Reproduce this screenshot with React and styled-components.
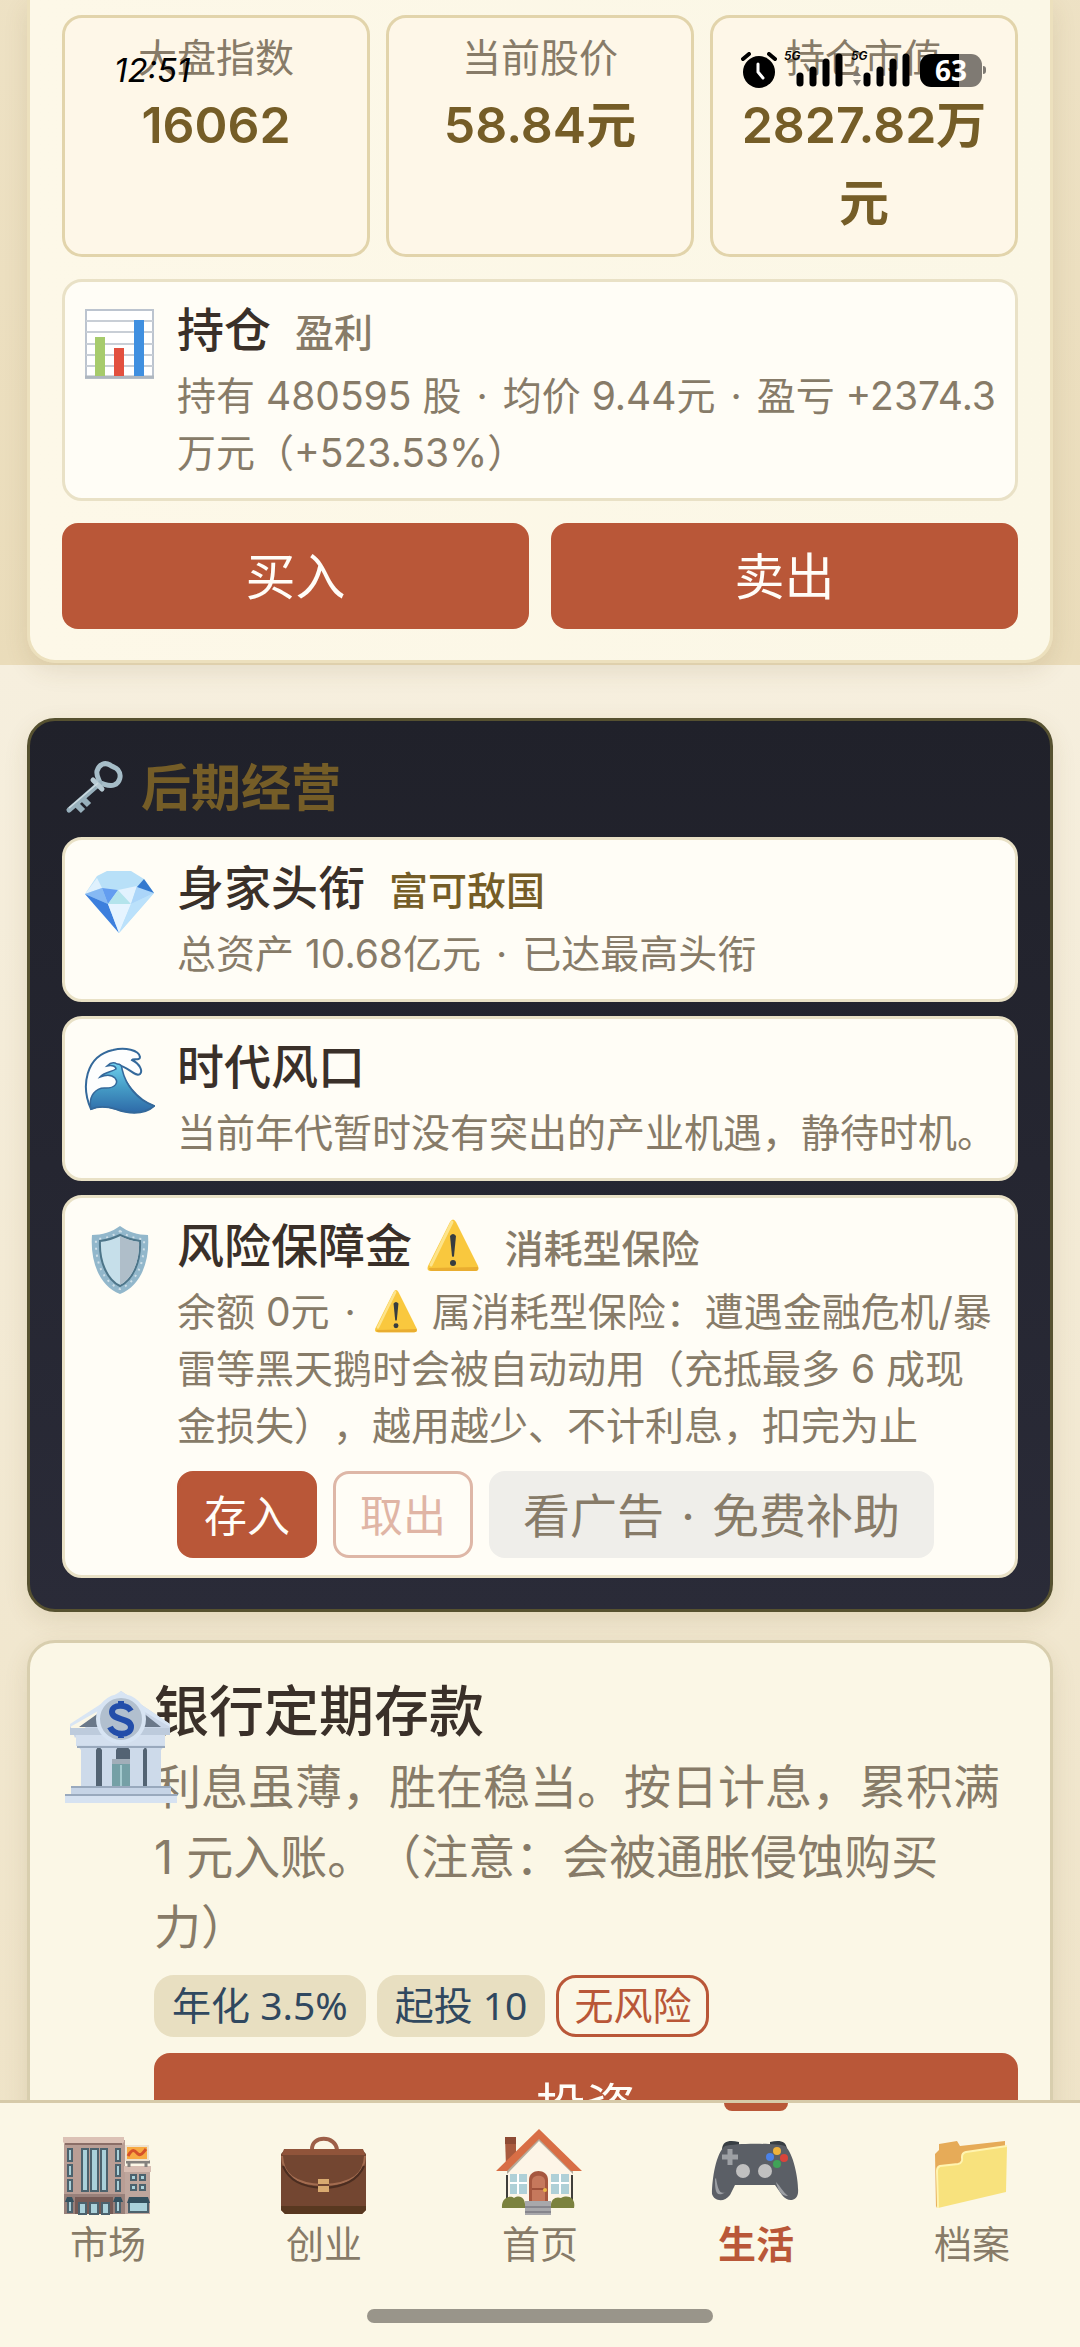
import React from "react";
import styled, { createGlobalStyle } from "styled-components";

const color = {
  ink: "#3a3029",
  muted: "#877b68",
  gold: "#755d27",
  brick: "#b95738",
  cream: "#fbf7e6",
  paper: "#fffdf6",
  line: "#e9e1c6",
};

const GlobalStyle = createGlobalStyle`
  * { box-sizing: border-box; }
  body {
    margin: 0;
    color: ${color.ink};
    font-family: Inter, "Noto Sans CJK SC", sans-serif;
    text-spacing-trim: space-all;
  }
  h2, h3, p { margin: 0; }
  button { font-family: inherit; margin: 0; cursor: pointer; }
`;

const Shell = styled.div`
  position: relative;
  display: flex;
  flex-direction: column;
  height: 100vh;
  overflow: hidden;
`;

const Scroll = styled.main`
  flex: 1;
  min-height: 0;
  overflow-y: auto;
  scrollbar-width: none;
  padding: 0 27px 28px;
  background: linear-gradient(#f6efde, #eadcba) 0 665px / 100% 2347px repeat-y;
`;

const Card = styled.section`
  padding: 31px 32px;
  margin-bottom: 28px;
  border: 3px solid #d8ceae;
  border-radius: 28px;
  background: ${color.cream};
  box-shadow: 0 8px 24px rgba(110, 85, 30, 0.12);
`;

const StockCard = styled(Card)`
  display: grid;
  gap: 22px;
  padding-top: 15px;
  margin-bottom: 55px;
  border-top: 0;
  border-color: #ece0bd;
  border-radius: 0 0 28px 28px;
  background: linear-gradient(90deg, #fdf8e8, #fbf7e6);
`;

const DarkCard = styled(Card)`
  display: grid;
  gap: 14px;
  border-color: #565130;
  background: linear-gradient(#20212a, #2a2b38);
`;

const Stats = styled.div`
  display: grid;
  grid-template-columns: repeat(3, minmax(0, 1fr));
  gap: 16px;
`;

const Stat = styled.div`
  padding: 12px;
  border: 3px solid #e2d4ab;
  border-radius: 20px;
  background: #fef7e8;
  text-align: center;
`;

const StatLabel = styled.div`
  color: ${color.muted};
  font-size: 39px;
  line-height: 56px;
`;

const StatValue = styled.div`
  color: ${color.gold};
  font-size: 50px;
  font-weight: 600;
  line-height: 78px;
`;

const Item = styled.article`
  display: flex;
  align-items: flex-start;
  gap: 22px;
  padding: 17px 15px 17px 18px;
  border: 3px solid ${color.line};
  border-radius: 20px;
  background: ${color.paper};
`;

const ItemIcon = styled.div`
  flex: none;
  display: flex;
  width: 72px;
  padding-top: 9px;
`;

const ItemBody = styled.div`
  flex: 1;
  min-width: 0;
`;

const ItemHead = styled.div`
  display: flex;
  align-items: baseline;
  gap: 24px;
  height: 62px;
  margin-bottom: 6px;
  line-height: 62px;
`;

const ItemTitle = styled.h3`
  font-size: 47px;
  font-weight: 500;
  line-height: 62px;
`;

const Tag = styled.span`
  color: ${(p) => (p.$gold ? color.gold : color.muted)};
  font-size: 39px;
  font-weight: 500;
`;

const Note = styled.p`
  color: ${color.muted};
  font-size: 39px;
  line-height: 57px;
`;

const Separator = styled.span`
  padding: 0 4px;
`;

const DarkHeading = styled.h2`
  display: flex;
  align-items: center;
  gap: 17px;
  height: 71px;
  color: ${color.gold};
  font-size: 50px;
  font-weight: 600;
`;

const HeadingText = styled.span`
  padding-bottom: 8px;
`;

const ButtonRow = styled.div`
  display: flex;
  gap: ${(p) => p.$gap}px;
  margin-top: ${(p) => p.$top || 0}px;
`;

const Button = styled.button`
  flex: 1;
  width: 100%;
  height: 106px;
  padding: 0 0 6px;
  border: 0;
  border-radius: 16px;
  background: ${color.brick};
  color: #fffdf8;
  font-size: 50px;
`;

const SmallButton = styled.button`
  height: 87px;
  padding: 0 ${(p) => (p.$wide ? 31 : 24)}px 4px;
  border: 3px solid
    ${(p) => (p.$kind === "ghost" ? "#deb7a7" : p.$kind === "ad" ? "#efeeea" : color.brick)};
  border-radius: 16px;
  background: ${(p) =>
    p.$kind === "ghost" ? "transparent" : p.$kind === "ad" ? "#efeeea" : color.brick};
  color: ${(p) =>
    p.$kind === "ghost" ? "#e0b5a5" : p.$kind === "ad" ? "#877b68" : "#fffdf8"};
  font-size: ${(p) => (p.$wide ? 47 : 43)}px;
`;

const BankCard = styled(Card)`
  display: flex;
  gap: 22px;
`;

const BankIcon = styled.div`
  position: relative;
  z-index: 1;
  flex: none;
  width: 70px;
  padding-top: 14px;
`;

const BankTitle = styled.h2`
  margin-bottom: 4px;
  font-size: 55px;
  font-weight: 500;
  line-height: 74px;
`;

const BankNote = styled.p`
  color: ${color.muted};
  font-size: 47px;
  line-height: 70px;
`;

const Chips = styled.div`
  display: flex;
  gap: 11px;
  margin: 13px 0 16px;
`;

const Chip = styled.span`
  height: 62px;
  padding: 0 15px;
  border: 3px solid ${(p) => (p.$outline ? color.brick : "#e8dfc1")};
  border-radius: 20px;
  background: ${(p) => (p.$outline ? "transparent" : "#e8dfc1")};
  color: ${(p) => (p.$outline ? color.brick : "#30485f")};
  font-family: "Noto Sans", "Noto Sans CJK SC", sans-serif;
  font-size: 39px;
  line-height: 54px;
`;

const Nav = styled.nav`
  flex: none;
  border-top: 3px solid #d6caa9;
  background: ${color.cream};
`;

const Tabs = styled.div`
  display: grid;
  grid-template-columns: repeat(5, minmax(0, 1fr));
`;

const Tab = styled.button`
  position: relative;
  display: flex;
  flex-direction: column;
  align-items: center;
  padding: 21px 0 0;
  border: 0;
  background: none;
  color: ${(p) => (p.$active ? color.brick : color.muted)};
  font-size: 38px;
  font-weight: ${(p) => (p.$active ? 700 : 400)};
  line-height: 48px;

  &::before {
    content: "";
    display: ${(p) => (p.$active ? "block" : "none")};
    position: absolute;
    top: 0;
    width: 64px;
    height: 8px;
    border-radius: 0 0 8px 8px;
    background: ${color.brick};
  }
`;

const HomeBar = styled.div`
  width: 346px;
  height: 14px;
  margin: 41px auto 24px;
  border-radius: 7px;
  background: #99958a;
`;

const StatusBar = styled.div`
  position: absolute;
  top: 0;
  left: 0;
  right: 0;
  display: flex;
  align-items: center;
  justify-content: space-between;
  height: 140px;
  padding: 0 94px 0 114px;
  color: #000;
  pointer-events: none;
`;

const Clock = styled.time`
  font-size: 33px;
  font-style: italic;
  line-height: 36px;
`;

const StatusIcons = styled.div`
  display: flex;
  align-items: center;
  gap: 9px;
`;

const SignalBox = styled.div`
  position: relative;
  display: flex;
`;

const Generation = styled.span`
  position: absolute;
  top: -4px;
  left: -2px;
  font-size: 12px;
  font-style: italic;
  font-weight: 600;
  line-height: 14px;
`;

const Battery = styled.div`
  display: flex;
  align-items: center;
  gap: 1px;

  &::after {
    content: "";
    width: 3px;
    height: 8px;
    border-radius: 0 3px 3px 0;
    background: #7f7a73;
  }
`;

const BatteryBody = styled.span`
  width: 62px;
  height: 33px;
  border-radius: 11px;
  background: linear-gradient(90deg, #000 63%, #7f7a73 63%);
  color: #fff;
  font-family: "Open Sans", sans-serif;
  font-size: 28px;
  font-weight: 700;
  line-height: 33px;
  text-align: center;
`;

const InlineSvg = styled.svg`
  display: inline-block;
  margin: 0 ${(p) => p.$gutter}px;
  vertical-align: ${(p) => p.$drop}px;
`;

const ChartIcon = () => (
  <svg width="72" height="72" viewBox="0 0 72 72" aria-hidden="true">
    <rect x="3" y="2" width="67" height="68" fill="#fff" stroke="#bcc4cf" strokeWidth="2" />
    <path d="M3 13H70M3 24H70M3 36H70M3 47H70M3 58H70" stroke="#c8ced6" strokeWidth="2" />
    <path d="M2 69H71" stroke="#aeb6bf" strokeWidth="3" />
    <rect x="12" y="29" width="10" height="39" fill="#a6cb6c" />
    <rect x="31" y="40" width="10" height="28" fill="#e2503f" />
    <rect x="51" y="12" width="10" height="56" fill="#3f8fe0" />
  </svg>
);

const GemIcon = () => (
  <svg width="72" height="72" viewBox="0 0 72 72" aria-hidden="true">
    <path d="M2 28L14 10L24 5H48L61 13L71 27L36 67Z" fill="#b8e0f8" />
    <path d="M14 12L2 28L19 22Z" fill="#dff1fd" />
    <path d="M2 28L19 22L25 38Z" fill="#86b9f3" />
    <path d="M19 22L35 24L25 38Z" fill="#639df0" />
    <path d="M2 28L25 38L36 67Z" fill="#3d7fdd" />
    <path d="M35 24L25 38H48Z" fill="#b4e4ec" />
    <path d="M35 24L54 20L48 38Z" fill="#e2f2fe" />
    <path d="M54 20L71 27L48 38Z" fill="#abd5f9" />
    <path d="M61 13L54 21L71 27Z" fill="#3479cf" />
    <path d="M25 38H48L36 67Z" fill="#e6f4ff" />
    <path d="M48 38L71 27L36 67Z" fill="#bbe1fb" />
  </svg>
);

const WaveIcon = () => (
  <svg width="72" height="72" viewBox="0 0 72 72" aria-hidden="true">
    <defs>
      <linearGradient id="sea" x1="0" y1="0" x2="0" y2="1">
        <stop offset="0" stopColor="#6fd0ee" />
        <stop offset="0.5" stopColor="#459cc6" />
        <stop offset="1" stopColor="#2e6aa8" />
      </linearGradient>
    </defs>
    <path
      d="M8 64C-2 42 2 11 30 5C42 2 56 5 57 12C57 16 50 13 49 15C57 19 60 26 57 29C52 33 46 21 34 20C42 37 52 54 71 61C60 71 43 68 33 64C23 61 15 61 8 64Z"
      fill="#fdfefe"
      stroke="#34699b"
      strokeWidth="2"
    />
    <path
      d="M34 19C38 19 39 21 39 24C43 41 54 55 71 61C60 70 44 68 33 64C23 61 15 61 8 64C5 51 13 42 23 43C32 43 36 38 32 33C28 29 22 30 17 32C21 27 29 27 33 24C33 21 29 20 24 21C27 18 31 17 34 19Z"
      fill="url(#sea)"
      stroke="#34699b"
      strokeWidth="1.5"
    />
  </svg>
);

const ShieldIcon = () => (
  <svg width="72" height="72" viewBox="0 0 72 72" aria-hidden="true">
    <path d="M37 2C45 8 55 11 65 11C67 37 58 62 37 70C16 62 7 37 9 11C19 11 29 8 37 2Z" fill="#92b7cb" />
    <path
      d="M37 7C44 12 52 15 61 15C62 38 54 58 37 65C20 58 12 38 13 15C22 15 30 12 37 7Z"
      fill="none"
      stroke="#cfdfe8"
      strokeWidth="2"
      strokeDasharray="2 5"
    />
    <path d="M37 11C43 14 49 16 57 17C58 37 50 56 37 62C24 56 16 37 17 17C25 16 31 14 37 11Z" fill="#c6dfea" stroke="#4d7589" strokeWidth="2" />
    <path d="M37 12C43 15 49 17 56 18C57 37 49 55 37 61Z" fill="#afbec9" />
  </svg>
);

const KeyIcon = () => (
  <svg width="62" height="62" viewBox="0 0 62 62" aria-hidden="true">
    <path
      d="M38 26C37 22 34 19 35 14C37 7 43 5 48 8C50 10 54 10 56 13C60 18 58 26 52 28C47 30 43 27 38 26Z"
      fill="none"
      stroke="#a6bdc8"
      strokeWidth="5"
    />
    <path d="M38 26L7 53" stroke="#98b0bc" strokeWidth="5" strokeLinecap="round" />
    <path d="M31 23L40 32" stroke="#b7cad3" strokeWidth="5" strokeLinecap="round" />
    <path d="M14 47L21 54M21 42L27 48" stroke="#98b0bc" strokeWidth="6" />
    <path d="M36 26L7 51" stroke="#cddbe1" strokeWidth="1.5" />
  </svg>
);

const WarnIcon = ({ size, drop, gutter = 0 }) => (
  <InlineSvg
    $drop={drop}
    $gutter={gutter}
    width={size}
    height={size}
    viewBox="0 0 56 56"
    role="img"
    aria-label="警告"
  >
    <path d="M25 5Q28 0 31 5L53 49Q55 54 50 54H6Q1 54 3 49Z" fill="#f9c83e" />
    <path d="M27 5L6 48" stroke="#fde48b" strokeWidth="3" strokeLinecap="round" />
    <path d="M4 51Q4 54 7 54H50Q54 54 53 50Z" fill="#e9ad30" />
    <path d="M25 19Q28 15 31 19L29 39Q28 41 27 39Z" fill="#373d40" />
    <circle cx="28" cy="46" r="3" fill="#373d40" />
  </InlineSvg>
);

const BankDrawing = () => (
  <svg width="118" height="118" viewBox="0 0 118 118" aria-hidden="true">
    <path d="M13 50L59 3L108 36V46H8V37Z" fill="#c9d6e8" />
    <path d="M8 36L59 3L108 36V39L59 10L8 39Z" fill="#d8e5f4" />
    <path d="M17 39L38 24V39ZM99 39L80 24V39Z" fill="#6a7889" />
    <path d="M8 40H108V47H8Z" fill="#bdcbdc" />
    <path d="M14 47H103V58H14Z" fill="#d3dfee" />
    <path d="M20 58H98V100H20Z" fill="#536373" />
    <path d="M15 57H37L34 62V99H19V62ZM36 57H57L54 62V99H40V62ZM64 57H85L81 62V99H68V62ZM83 57H103L99 62V99H85V62Z" fill="#cddaea" />
    <path d="M50 72H68V99H50Z" fill="#75a0a6" />
    <path d="M50 71H68V76H50Z" fill="#a2aeb9" />
    <path d="M59 77V99" stroke="#a5cbd0" strokeWidth="2" />
    <path d="M9 99H109V106H9Z" fill="#c6d4e6" />
    <path d="M3 106H115V115H3Z" fill="#d6e2f1" />
    <path d="M9 99H109M3 107H115M15 59H103" stroke="#99a9bd" strokeWidth="2" />
    <circle cx="59" cy="31" r="23" fill="#b1bfce" stroke="#d7e4f3" strokeWidth="4" />
    <path d="M69 23C65 16 50 16 50 24C50 33 69 29 69 39C69 48 52 48 48 39M59 13V20M59 43V50" fill="none" stroke="#234eaa" strokeWidth="6" />
  </svg>
);

const MarketIcon = () => (
  <svg width="96" height="96" viewBox="0 0 96 96" aria-hidden="true">
    <path d="M4 16H65V90H4Z" fill="#b99e95" />
    <path d="M3 13H64V18L62 20H5L3 18Z" fill="#dcc2b6" />
    <path d="M5 20H62" stroke="#8b6e67" strokeWidth="2" />
    <path d="M4 70H65V90H4Z" fill="#98807a" />
    <path d="M15 73H53V90H15Z" fill="#765b56" />
    <g fill="#aad1da" stroke="#4c626d" strokeWidth="2">
      <path d="M22 25H28V67H22ZM31 25H38V67H31ZM41 25H47V67H41ZM8 25H12V37H8ZM8 41H12V52H8ZM8 56H12V67H8ZM56 25H60V37H56ZM56 41H60V52H56ZM56 56H60V67H56ZM8 77H12V88H8ZM56 77H60V88H56Z" />
      <path d="M19 79H26V90H19ZM30 79H38V90H30ZM42 79H49V90H42Z" />
    </g>
    <path d="M65 43H90V90H65Z" fill="#bea69d" />
    <path d="M64 42H91V48H64Z" fill="#d7bdb2" />
    <path d="M66 38H90M69 39V43M86 39V43" stroke="#85827e" strokeWidth="3" />
    <path d="M66 22H88V36H66Z" fill="#f7aa43" stroke="#eee2d0" strokeWidth="2" />
    <path d="M68 32C73 23 75 27 78 30C81 32 83 29 86 25" fill="none" stroke="#d6522a" strokeWidth="3" />
    <g fill="#aad1da" stroke="#4c626d" strokeWidth="2">
      <path d="M71 51H76V56H71ZM80 51H85V56H80ZM71 61H76V66H71ZM80 61H85V66H80ZM69 77H88V88H69Z" />
    </g>
    <path d="M69 73H88L90 79H67ZM7 73H12L14 78H5ZM55 73H61L63 78H53Z" fill="#34515f" />
  </svg>
);

const BriefcaseIcon = () => (
  <svg width="96" height="96" viewBox="0 0 96 96" aria-hidden="true">
    <path d="M36 26C35 11 60 11 61 26" fill="none" stroke="#9d5f48" strokeWidth="4" />
    <path d="M9 25H86L90 30V86L86 90H9L5 86V30Z" fill="#734631" />
    <path d="M8 25H87L89 31H6Z" fill="#90543a" />
    <path d="M5 82H90V86L86 90H9L5 86Z" fill="#583820" />
    <path d="M6 32C7 50 18 60 47 61C77 60 88 50 89 32" fill="none" stroke="#a36c50" strokeWidth="2" />
    <path d="M7 42C13 56 25 63 47 64C69 63 82 56 88 42" fill="none" stroke="#4b2d20" strokeWidth="2" />
    <rect x="42" y="55" width="11" height="13" fill="#d9aa70" />
    <path d="M42 61H53" stroke="#704632" strokeWidth="2" />
  </svg>
);

const HouseIcon = () => (
  <svg width="96" height="96" viewBox="0 0 96 96" aria-hidden="true">
    <path d="M13 13H24V35L14 43Z" fill="#a95b3e" />
    <path d="M13 13H24V20H13Z" fill="#8e4b34" />
    <path d="M15 45L47 12L81 45V81H15Z" fill="#fdf5e7" />
    <path d="M15 50L47 17L81 50V43L47 9L15 43Z" fill="#b5aa9a" />
    <path d="M4 47L47 5L90 47H79L47 15L15 47Z" fill="#d86e45" />
    <path d="M15 51V78M80 51V78" stroke="#3f3e3b" strokeWidth="2" />
    <path d="M18 50H35V70H18ZM59 50H77V70H59Z" fill="#afd0d7" />
    <path d="M26 50V70M68 50V70M18 59H35M59 59H77" stroke="#fff" strokeWidth="2" />
    <path d="M37 81V56C37 44 56 44 56 56V81Z" fill="#a6573f" />
    <path d="M40 80V57C40 50 53 50 53 57V80Z" fill="#c6785c" />
    <path d="M40 65H53" stroke="#9e513b" strokeWidth="2" />
    <circle cx="53" cy="66" r="2" fill="#edb847" />
    <path d="M10 84C9 73 19 71 22 74C29 70 34 75 33 84ZM59 84C58 75 64 72 69 74C77 70 84 75 82 84Z" fill="#7b823e" />
    <path d="M33 77H59V91H33Z" fill="#a8a8ab" />
    <path d="M33 83H59M33 88H59" stroke="#86868d" strokeWidth="2" />
  </svg>
);

const GamepadIcon = () => (
  <svg width="96" height="96" viewBox="0 0 96 96" aria-hidden="true">
    <path d="M14 25C15 17 21 16 31 18V24ZM79 25C78 17 72 16 62 18V24Z" fill="#383e43" />
    <path d="M17 22C28 19 66 19 77 22C86 29 91 59 90 69C89 77 80 79 74 71L67 61H27L22 71C16 79 6 77 4 70C4 55 8 29 17 22Z" fill="#5b5f66" />
    <path d="M7 55C7 68 8 74 18 68C12 71 10 66 8 54ZM68 58C70 66 73 72 80 72C75 68 72 62 68 58Z" fill="#9c9fa4" />
    <path d="M22 25V41M14 33H30" stroke="#9da0a4" strokeWidth="5" />
    <circle cx="35" cy="47" r="7" fill="#c0c0c0" />
    <circle cx="57" cy="47" r="7" fill="#c0c0c0" />
    <circle cx="69" cy="27" r="4" fill="#efb23b" />
    <circle cx="62" cy="33" r="4" fill="#4b82e8" />
    <circle cx="76" cy="34" r="4" fill="#d9443a" />
    <circle cx="69" cy="40" r="4" fill="#40a257" />
  </svg>
);

const FolderIcon = () => (
  <svg width="96" height="96" viewBox="0 0 96 96" aria-hidden="true">
    <path d="M12 84L11 30L15 26V20L33 17L36 22L81 17V30L14 80Z" fill="#e6ab58" />
    <path d="M16 42L34 40Q39 39 38 33Q38 29 42 28L83 22L82 68L14 84L13 47Q13 43 16 42Z" fill="#f8e27d" />
    <path d="M14 84L13 47Q13 43 16 42L34 40Q39 39 38 33Q38 29 42 28L83 22" fill="none" stroke="#fff4b0" strokeWidth="2" />
  </svg>
);

const AlarmIcon = () => (
  <svg width="36" height="36" viewBox="0 0 36 36" aria-hidden="true">
    <circle cx="18" cy="20" r="16" />
    <path d="M2 7L8 2M34 7L28 2" stroke="#000" strokeWidth="4" strokeLinecap="round" />
    <path d="M17 12V20L22 26" fill="none" stroke="#fff" strokeWidth="3" strokeLinecap="round" />
  </svg>
);

const SignalIcon = ({ arrows }) => (
  <svg width="58" height="34" viewBox="0 0 58 34" aria-hidden="true">
    {arrows && <path d="M0 23L4 18L8 23ZM0 27H8L4 33Z" fill="#7f7a73" />}
    <path d="M14 23V30M27 17V30M40 9V30M53 4V30" stroke="#000" strokeWidth="7" strokeLinecap="round" />
  </svg>
);

const stats = [
  ["大盘指数", "16062"],
  ["当前股价", "58.84元"],
  ["持仓市值", "2827.82万元"],
];

const tabs = [
  ["市场", MarketIcon],
  ["创业", BriefcaseIcon],
  ["首页", HouseIcon],
  ["生活", GamepadIcon],
  ["档案", FolderIcon],
];

const Dot = () => (
  <>
    {" "}
    <Separator>·</Separator>{" "}
  </>
);

function InfoItem({ icon: Icon, title, tag, gold, note, children }) {
  return (
    <Item>
      <ItemIcon>
        <Icon />
      </ItemIcon>
      <ItemBody>
        <ItemHead>
          <ItemTitle>{title}</ItemTitle>
          {tag && <Tag $gold={gold}>{tag}</Tag>}
        </ItemHead>
        <Note>{note}</Note>
        {children}
      </ItemBody>
    </Item>
  );
}

export default function App() {
  return (
    <Shell>
      <GlobalStyle />
      <Scroll>
        <StockCard>
          <Stats>
            {stats.map(([label, value]) => (
              <Stat key={label}>
                <StatLabel>{label}</StatLabel>
                <StatValue>{value}</StatValue>
              </Stat>
            ))}
          </Stats>
          <InfoItem
            icon={ChartIcon}
            title="持仓"
            tag="盈利"
            note={
              <>
                持有 480595 股<Dot />均价 9.44元<Dot />盈亏 +2374.3万元（+523.53%）
              </>
            }
          />
          <ButtonRow $gap={22}>
            <Button>买入</Button>
            <Button>卖出</Button>
          </ButtonRow>
        </StockCard>

        <DarkCard>
          <DarkHeading>
            <KeyIcon />
            <HeadingText>后期经营</HeadingText>
          </DarkHeading>
          <InfoItem
            icon={GemIcon}
            title="身家头衔"
            tag="富可敌国"
            gold
            note={
              <>
                总资产 10.68亿元<Dot />已达最高头衔
              </>
            }
          />
          <InfoItem
            icon={WaveIcon}
            title="时代风口"
            note="当前年代暂时没有突出的产业机遇，静待时机。"
          />
          <InfoItem
            icon={ShieldIcon}
            title={
              <>
                风险保障金 <WarnIcon size={56} drop={-10} />
              </>
            }
            tag="消耗型保险"
            note={
              <>
                余额 0元<Dot />
                <WarnIcon size={46} drop={-8} gutter={2} />{" "}
                属消耗型保险：遭遇金融危机/暴雷等黑天鹅时会被自动动用（充抵最多 6
                成现金损失），越用越少、不计利息，扣完为止
              </>
            }
          >
            <ButtonRow $gap={16} $top={17}>
              <SmallButton>存入</SmallButton>
              <SmallButton $kind="ghost" disabled>
                取出
              </SmallButton>
              <SmallButton $kind="ad" $wide>
                看广告<Dot />免费补助
              </SmallButton>
            </ButtonRow>
          </InfoItem>
        </DarkCard>

        <BankCard>
          <BankIcon>
            <BankDrawing />
          </BankIcon>
          <ItemBody>
            <BankTitle>银行定期存款</BankTitle>
            <BankNote>
              利息虽薄，胜在稳当。按日计息，累积满 1 元入账。（注意：会被通胀侵蚀购买力）
            </BankNote>
            <Chips>
              <Chip>年化 3.5%</Chip>
              <Chip>起投 10</Chip>
              <Chip $outline>无风险</Chip>
            </Chips>
            <Button>投资</Button>
          </ItemBody>
        </BankCard>
      </Scroll>

      <Nav>
        <Tabs>
          {tabs.map(([label, Icon]) => (
            <Tab key={label} $active={label === "生活"}>
              <Icon />
              {label}
            </Tab>
          ))}
        </Tabs>
        <HomeBar />
      </Nav>

      <StatusBar>
        <Clock>12:51</Clock>
        <StatusIcons>
          <AlarmIcon />
          <SignalBox>
            <Generation>5G</Generation>
            <SignalIcon />
          </SignalBox>
          <SignalBox>
            <Generation>5G</Generation>
            <SignalIcon arrows />
          </SignalBox>
          <Battery>
            <BatteryBody>63</BatteryBody>
          </Battery>
        </StatusIcons>
      </StatusBar>
    </Shell>
  );
}
